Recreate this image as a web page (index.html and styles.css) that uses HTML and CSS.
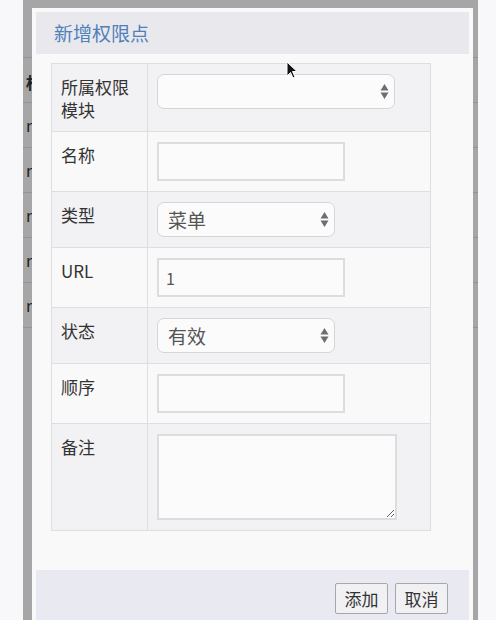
FILE: index.html
```html
<!DOCTYPE html>
<html lang="zh-CN">
<head>
    <meta charset="UTF-8">
    <meta name="viewport" content="width=device-width, initial-scale=1.0">
    <link rel="stylesheet" href="styles.css">
    <title>新增权限点</title>
</head>
<body>
    <!-- page behind the dialog, only its left edge shows -->
    <div class="page">
        <div class="page-row head">权</div>
        <div class="page-row">r</div>
        <div class="page-row">r</div>
        <div class="page-row">r</div>
        <div class="page-row">r</div>
        <div class="page-row">r</div>
    </div>

    <div class="dialog">
        <div class="dialog-head">新增权限点</div>
        <div class="dialog-body">
            <table class="form-table">
                <colgroup>
                    <col class="col-label">
                    <col>
                </colgroup>
                <tr>
                    <th>所属权限<br>模块</th>
                    <td>
                        <div class="select wide">
                            <span></span>
                            <svg width="9" height="17" viewBox="0 0 9 17"><path d="M4.5 1 L8.5 7.5 L0.5 7.5 Z M4.5 16 L8.5 9.5 L0.5 9.5 Z" fill="#6e6e72"/></svg>
                        </div>
                    </td>
                </tr>
                <tr>
                    <th>名称</th>
                    <td><input class="text" type="text"></td>
                </tr>
                <tr>
                    <th>类型</th>
                    <td>
                        <div class="select">
                            <span>菜单</span>
                            <svg width="9" height="17" viewBox="0 0 9 17"><path d="M4.5 1 L8.5 7.5 L0.5 7.5 Z M4.5 16 L8.5 9.5 L0.5 9.5 Z" fill="#6e6e72"/></svg>
                        </div>
                    </td>
                </tr>
                <tr>
                    <th>URL</th>
                    <td><input class="text" type="text" value="1"></td>
                </tr>
                <tr>
                    <th>状态</th>
                    <td>
                        <div class="select">
                            <span>有效</span>
                            <svg width="9" height="17" viewBox="0 0 9 17"><path d="M4.5 1 L8.5 7.5 L0.5 7.5 Z M4.5 16 L8.5 9.5 L0.5 9.5 Z" fill="#6e6e72"/></svg>
                        </div>
                    </td>
                </tr>
                <tr>
                    <th>顺序</th>
                    <td><input class="text" type="text"></td>
                </tr>
                <tr>
                    <th>备注</th>
                    <td><textarea class="memo"></textarea></td>
                </tr>
            </table>
        </div>
        <div class="dialog-foot">
            <button type="button">添加</button>
            <button type="button">取消</button>
        </div>
    </div>

    <svg class="cursor" width="12" height="18" viewBox="0 0 12 18"><path d="M1 1 L1 15 L4.5 11.5 L7 17 L9 16 L6.5 10.5 L11 10.5 Z" fill="#111" stroke="#fff" stroke-width="1"/></svg>
</body>
</html>
```

FILE: styles.css
```css
html, body {
  height: 100%;
}

body {
  margin: 0;
  position: relative;
  overflow: hidden;
  background-color: #f8f8fa;
  font-family: "Noto Sans CJK SC", "Noto Sans", sans-serif;
  color: #333;
}

/* page behind */
.page {
  margin: 0 18px 0 23px;
  padding-top: 57px;
}

.page-row {
  height: 44px;
  line-height: 44px;
  padding-left: 3px;
  border-top: 1px solid #dcdce0;
  font-size: 16px;
  color: #333;
}

.page-row:last-child {
  border-bottom: 1px solid #dcdce0;
}

.page-row.head {
  font-weight: bold;
  line-height: 48px;
}

/* dialog */
.dialog {
  position: absolute;
  left: 23px;
  top: 0;
  width: 455px;
  height: 100%;
  box-sizing: border-box;
  display: flex;
  flex-direction: column;
  padding: 4px 4px 0 4px;
  border-style: solid;
  border-color: rgba(0, 0, 0, 0.33);
  border-width: 8px 5px 0 9px;
  background-color: #f9f9fa;
  background-clip: padding-box;
}

.dialog-head {
  height: 42px;
  line-height: 42px;
  padding-left: 18px;
  background-color: #e9e9ed;
  color: #4f80bb;
  font-size: 19px;
}

.dialog-body {
  padding: 9px 0 39px 15px;
}

.form-table {
  width: 380px;
  table-layout: fixed;
  border-collapse: collapse;
  border: 1px solid #dedde2;
}

.col-label {
  width: 96px;
}

.form-table th,
.form-table td {
  border: 1px solid #dedde2;
  vertical-align: top;
  text-align: left;
}

.form-table tr:nth-child(odd) {
  background-color: #f2f1f4;
}

.form-table th {
  padding: 11px 8px 10px 9px;
  font-size: 17px;
  line-height: 23px;
  font-weight: normal;
  color: #333;
}

.form-table td {
  padding: 10px 9px;
}

.text {
  display: block;
  width: 188px;
  height: 39px;
  box-sizing: border-box;
  margin: 0;
  padding: 0 7px;
  border: 2px solid #dddde0;
  background-color: #fbfbfc;
  font-family: "Noto Sans CJK SC", "Noto Sans", sans-serif;
  font-size: 16px;
  color: #555;
}

.text:focus {
  outline: 0;
}

.select {
  width: 178px;
  height: 35px;
  box-sizing: border-box;
  display: flex;
  align-items: center;
  justify-content: space-between;
  padding: 0 5px 0 10px;
  border: 1px solid #d6d6da;
  border-radius: 7px;
  background-color: #fbfbfc;
  font-size: 19px;
  color: #555;
}

.select.wide {
  width: 238px;
}

.memo {
  display: block;
  width: 240px;
  height: 86px;
  box-sizing: border-box;
  margin: 0;
  border: 2px solid #dddde0;
  background-color: #fbfbfc;
}

.dialog-foot {
  flex: 1;
  display: flex;
  justify-content: flex-end;
  align-items: flex-start;
  gap: 7px;
  padding: 13px 21px 0 0;
  background-color: #e8e9f1;
}

.dialog-foot button {
  width: 53px;
  height: 31px;
  padding: 0;
  border: 1px solid #a7a7ab;
  border-radius: 2px;
  background-color: #f1f1f3;
  font-family: "Noto Sans CJK SC", "Noto Sans", sans-serif;
  font-size: 17px;
  color: #333;
}

.cursor {
  position: absolute;
  left: 286px;
  top: 61px;
}
```
